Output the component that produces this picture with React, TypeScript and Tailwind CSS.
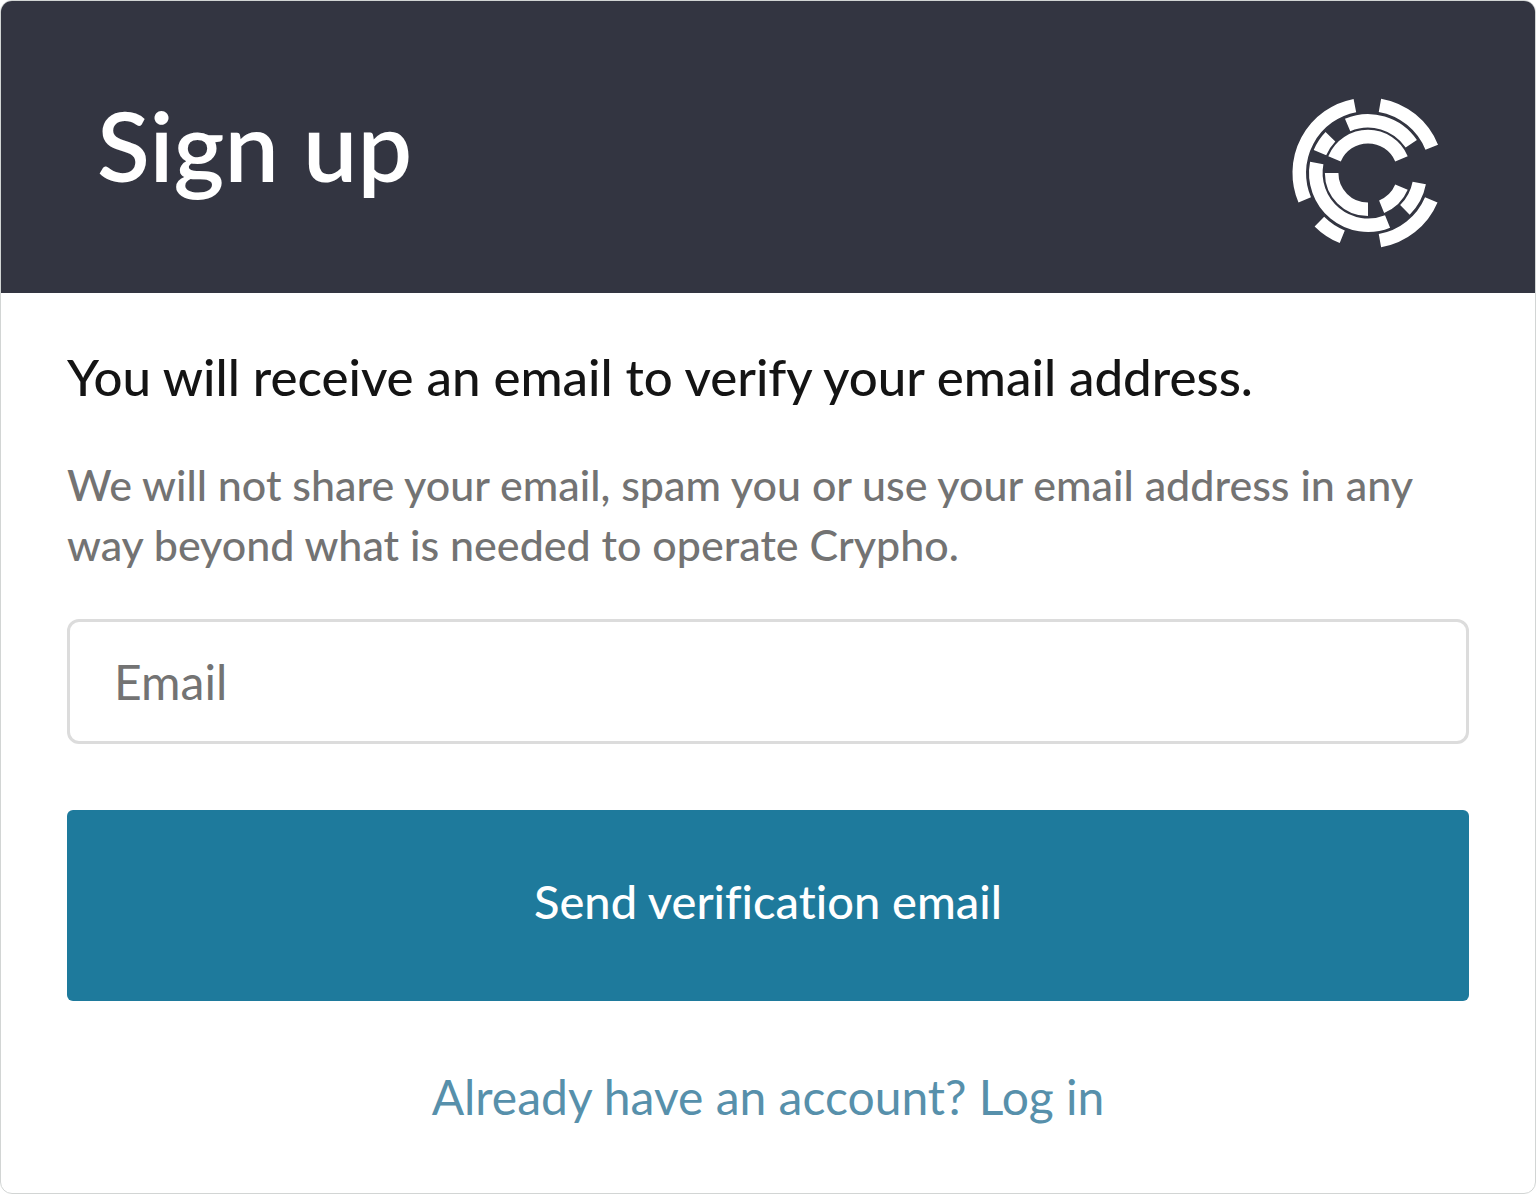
import { useState } from 'react';

// radius of the ring, start angle, end angle (degrees, clockwise from the right)
const segments = [
  [208, 157, 259],
  [208, 280, 338],
  [208, 23, 80],
  [208, 112, 135],
  [158, 247, 326],
  [158, 11, 45],
  [158, 68, 191],
  [158, 203, 224],
  [110, 203, 337],
  [110, 23, 68],
  [110, 90, 180],
];

function arc(r: number, from: number, to: number) {
  const point = (deg: number) => {
    const a = (deg * Math.PI) / 180;
    return `${(r * Math.cos(a)).toFixed(1)} ${(r * Math.sin(a)).toFixed(1)}`;
  };
  return `M${point(from)} A${r} ${r} 0 0 1 ${point(to)}`;
}

function Logo() {
  return (
    <svg viewBox="-230 -230 460 460" className="w-[152px] h-[152px] shrink-0" fill="none" stroke="white" strokeWidth="41" aria-hidden="true">
      {segments.map(([r, from, to], index) => (
        <path key={index} d={arc(r, from, to)} />
      ))}
    </svg>
  );
}

export default function App() {
  const [email, setEmail] = useState('');

  return (
    <main className="min-h-screen flex flex-col bg-white border border-[#d2d5d4] rounded-xl overflow-hidden font-['Lato',sans-serif] [font-variant-ligatures:none]">
      <header className="flex items-center justify-between bg-[#333541] pl-24 pr-[91px] pt-24 pb-11">
        <h1 className="text-[97px] leading-[96px] pb-14 font-semibold text-white">Sign up</h1>
        <Logo />
      </header>

      <form className="flex flex-col px-[66px] pt-[54px] pb-16" onSubmit={(e) => e.preventDefault()}>
        <h2 className="text-[51px] leading-[60px] font-medium text-[#141414]">
          You will receive an email to verify your email address.
        </h2>
        <p className="mt-12 text-[43px] leading-[60px] font-medium text-[#737373]">
          We will not share your email, spam you or use your email address in any way beyond what is needed to operate Crypho.
        </p>

        <input
          type="email"
          aria-label="Email"
          placeholder="Email"
          value={email}
          onChange={(e) => setEmail(e.target.value)}
          className="mt-11 h-[125px] w-full px-11 border-[3px] border-[#dcdcdc] rounded-xl text-[48px] text-[#333541] placeholder:text-[#737373] outline-none"
        />

        <button type="submit" className="mt-[66px] h-[191px] w-full pb-2 rounded-md bg-[#1e7a9c] text-[47px] font-medium text-white cursor-pointer">
          Send verification email
        </button>

        <a href="#login" className="mt-[66px] self-center text-[48px] leading-[60px] text-[#5790ab]">
          Already have an account? Log in
        </a>
      </form>
    </main>
  );
}
